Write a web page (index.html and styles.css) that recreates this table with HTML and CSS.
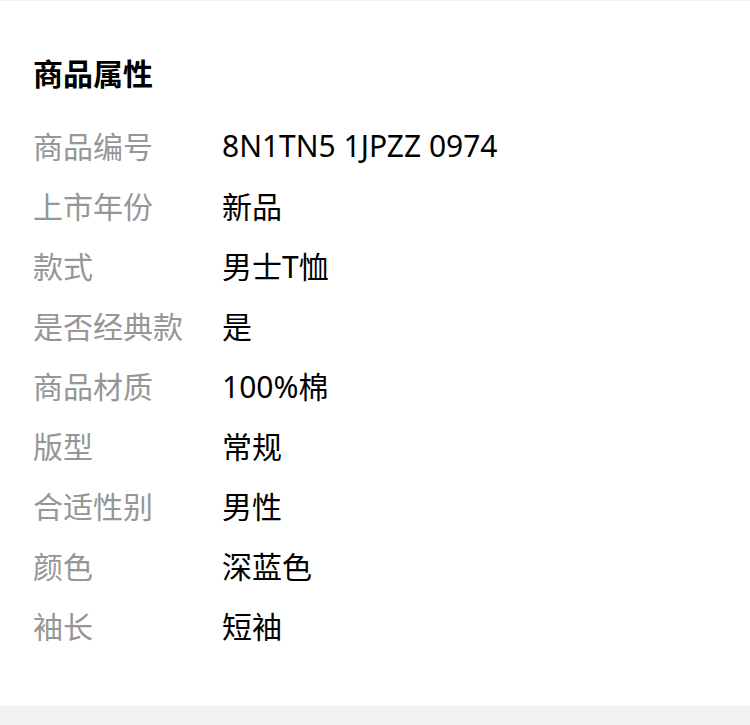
FILE: index.html
```html
<!DOCTYPE html>
<html lang="zh-CN">
<head>
    <meta charset="UTF-8">
    <meta name="viewport" content="width=device-width, initial-scale=1.0">
    <title>商品属性</title>
    <link rel="stylesheet" href="styles.css">
</head>
<body>
    <div class="page">
        <section class="attr-card">
            <h2 class="attr-title">商品属性</h2>
            <div class="attr-list">
                <div class="attr-row">
                    <span class="attr-label">商品编号</span>
                    <span class="attr-value">8N1TN5 1JPZZ 0974</span>
                </div>
                <div class="attr-row">
                    <span class="attr-label">上市年份</span>
                    <span class="attr-value">新品</span>
                </div>
                <div class="attr-row">
                    <span class="attr-label">款式</span>
                    <span class="attr-value">男士T恤</span>
                </div>
                <div class="attr-row">
                    <span class="attr-label">是否经典款</span>
                    <span class="attr-value">是</span>
                </div>
                <div class="attr-row">
                    <span class="attr-label">商品材质</span>
                    <span class="attr-value">100%棉</span>
                </div>
                <div class="attr-row">
                    <span class="attr-label">版型</span>
                    <span class="attr-value">常规</span>
                </div>
                <div class="attr-row">
                    <span class="attr-label">合适性别</span>
                    <span class="attr-value">男性</span>
                </div>
                <div class="attr-row">
                    <span class="attr-label">颜色</span>
                    <span class="attr-value">深蓝色</span>
                </div>
                <div class="attr-row">
                    <span class="attr-label">袖长</span>
                    <span class="attr-value">短袖</span>
                </div>
            </div>
        </section>
        <div class="page-footer"></div>
    </div>
</body>
</html>
```

FILE: styles.css
```css
* {
    margin: 0;
    padding: 0;
    box-sizing: border-box;
}

body {
    font-family: "Noto Sans", "Noto Sans CJK SC", sans-serif;
    background: #fff;
    color: #000;
}

.page {
    min-height: 725px;
    display: flex;
    flex-direction: column;
    border-top: 1px solid #f2f2f2;
}

.attr-card {
    background: #fff;
    padding: 48px 33px 51px;
}

.attr-title {
    font-size: 30px;
    font-weight: 700;
    line-height: 50px;
    margin-bottom: 16px;
}

.attr-row {
    display: flex;
    align-items: center;
    height: 60px;
}

.attr-label {
    width: 189px;
    flex-shrink: 0;
    font-size: 30px;
    color: #969696;
}

.attr-value {
    font-size: 30px;
    color: #000;
}

.page-footer {
    flex: 1;
    background: #f2f2f2;
}
```
